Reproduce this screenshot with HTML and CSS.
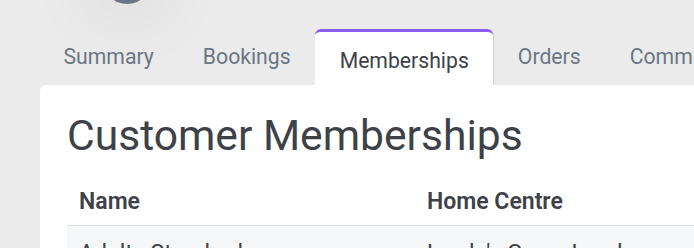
FILE: index.html
```html
<!DOCTYPE html>
<html lang="en">
<head>
    <meta charset="UTF-8">
    <title>Customer - Memberships</title>
    <link rel="stylesheet" href="styles.css">
</head>
<body>
    <div class="profile">
        <div class="avatar"></div>
    </div>

    <nav class="tabs">
        <a class="tab">Summary</a>
        <a class="tab">Bookings</a>
        <a class="tab active">Memberships</a>
        <a class="tab">Orders</a>
        <a class="tab">Communications</a>
    </nav>

    <main class="card">
        <h1 class="title">Customer Memberships</h1>
        <table class="table">
            <thead>
                <tr>
                    <th class="col-name">Name</th>
                    <th>Home Centre</th>
                </tr>
            </thead>
            <tbody>
                <tr>
                    <td>Adult - Standard</td>
                    <td>Lynda's Gym - London</td>
                </tr>
            </tbody>
        </table>
    </main>
</body>
</html>
```

FILE: styles.css
```css
:root {
    --bg: #ebebeb;
    --text: #3d4148;
    --muted: #6b7685;
    --accent: #8c5cf6;
    --line: #d9dce2;
}

body {
    margin: 0;
    background: var(--bg);
    font-family: Roboto, "Liberation Sans", sans-serif;
    color: var(--text);
    overflow: hidden;
    height: 248px;
}

.profile {
    display: flow-root;
    height: 29px;
    padding-left: 103px;
}

.avatar {
    width: 48px;
    height: 48px;
    margin-top: -44px;
    border-radius: 50%;
    background: #6a7686;
    box-shadow: 0 0 60px 30px rgba(0,0,0,0.04);
}

.tabs {
    display: flex;
    align-items: stretch;
    height: 56px;
    margin-left: 39px;
    white-space: nowrap;
    overflow: hidden;
}

.tab {
    display: flex;
    align-items: center;
    padding: 0 24.5px 1px;
    font-size: 21.2px;
    color: var(--muted);
    cursor: pointer;
}

.tab.active {
    background: #fff;
    color: var(--text);
    border-top: 3px solid var(--accent);
    border-radius: 6px 6px 0 0;
    padding-top: 4px;
    padding-bottom: 0;
    box-shadow: 1px 0 1px rgba(0,0,0,0.12);
}

.card {
    background: #fff;
    border-radius: 6px 0 0 0;
    margin-left: 40px;
    padding: 25px 0 0 27px;
    height: 200px;
}

.title {
    margin: 0 0 16px;
    font-size: 42.6px;
    font-weight: 400;
    line-height: 50px;
}

.table {
    width: 700px;
    border-collapse: collapse;
    font-size: 23px;
}

.table th {
    text-align: left;
    font-weight: 600;
    padding: 12px 12px 10px;
    border-bottom: 1px solid var(--line);
}

.table .col-name {
    width: 324px;
}

.table td {
    background: #f6f7f9;
    padding: 14px 12px;
}
```
